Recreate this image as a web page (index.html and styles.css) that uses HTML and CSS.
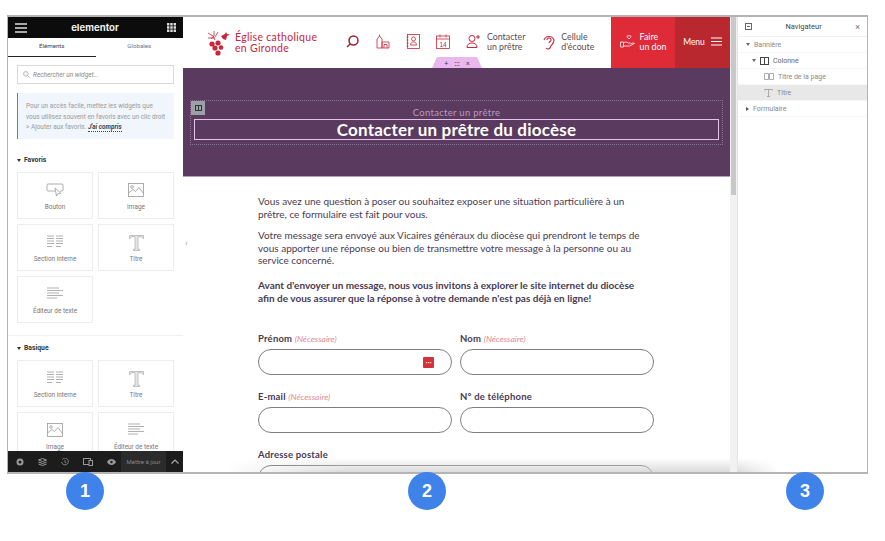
FILE: index.html
```html
<!doctype html>
<html lang="fr">
  <head>
    <meta charset="UTF-8" />
    <title>Contacter un prêtre</title>
    <link rel="stylesheet" href="styles.css">
  </head>
  <body>
    <div class="frame">
      <!-- panneau elementor -->
      <aside class="panel">
        <div class="panel-head">
          <svg width="12" height="10" viewBox="0 0 12 10"><path d="M0 1h12M0 5h12M0 9h12" stroke="#ddd" stroke-width="1.6"/></svg>
          <span class="brand">elementor</span>
          <svg width="9" height="9" viewBox="0 0 9 9" fill="#ddd"><path d="M0 0h2.4v2.4H0zM3.3 0h2.4v2.4H3.3zM6.6 0H9v2.4H6.6zM0 3.3h2.4v2.4H0zM3.3 3.3h2.4v2.4H3.3zM6.6 3.3H9v2.4H6.6zM0 6.6h2.4V9H0zM3.3 6.6h2.4V9H3.3zM6.6 6.6H9V9H6.6z"/></svg>
        </div>
        <div class="tabs">
          <div class="tab active">Éléments</div>
          <div class="tab">Globales</div>
        </div>
        <div class="panel-scroll">
          <div class="search">
            <svg width="7" height="7" viewBox="0 0 8 8" fill="none" stroke="#aaa"><circle cx="3.2" cy="3.2" r="2.6"/><path d="M5 5l2.6 2.6"/></svg>
            <span>Rechercher un widget...</span>
          </div>
          <div class="hint">
            Pour un accès facile, mettez les widgets que<br>vous utilisez souvent en favoris avec un clic droit<br>&gt; Ajouter aux favoris. <b>J'ai compris</b>
          </div>
          <div class="group-title"><i class="caret"></i>Favoris</div>
          <div class="widgets">
            <div class="widget">
              <svg width="18" height="15" viewBox="0 0 18 15" fill="none" stroke="#999" stroke-width=".8"><path d="M9 8H2a1 1 0 0 1-1-1V2a1 1 0 0 1 1-1h14a1 1 0 0 1 1 1v5a1 1 0 0 1-1 1h-2"/><path d="M9 5l1.5 8 1.6-2.4 2.6-.4z"/></svg>
              <span>Bouton</span>
            </div>
            <div class="widget">
              <svg width="16" height="14" viewBox="0 0 16 14" fill="none" stroke="#999" stroke-width=".8"><rect x=".5" y=".5" width="15" height="13"/><circle cx="4" cy="4" r="1.3"/><path d="M.5 10L5 6.5l2.5 2L11 4.5l4.5 6"/></svg>
              <span>Image</span>
            </div>
            <div class="widget">
              <svg width="16" height="13" viewBox="0 0 16 13" fill="none" stroke="#b0b0b0"><path d="M0 1h7M9 1h7M0 3.500h7M9 3.500h7M0 6h7M9 6h7M0 8.500h7M9 8.500h7M0 11.500h5M9 11.500h5"/></svg>
              <span>Section interne</span>
            </div>
            <div class="widget">
              <svg width="15" height="16" viewBox="0 0 15 16" fill="none" stroke="#aaa" stroke-width=".7"><path d="M.5.500h14v3h-.7c0-1-.6-1.800-2-1.800H9v12.600h1.500v1.200h-6v-1.200H6V1.700H3.200c-1.400 0-2 .8-2 1.800H.5z" fill="#e8e8e8"/></svg>
              <span>Titre</span>
            </div>
            <div class="widget">
              <svg width="16" height="12" viewBox="0 0 16 12" fill="none" stroke="#b0b0b0"><path d="M0 1h12M0 3.500h16M0 6h12M0 8.500h16M0 11h10"/></svg>
              <span>Éditeur de texte</span>
            </div>
          </div>
          <div class="group-title second"><i class="caret"></i>Basique</div>
          <div class="widgets">
            <div class="widget">
              <svg width="16" height="13" viewBox="0 0 16 13" fill="none" stroke="#b0b0b0"><path d="M0 1h7M9 1h7M0 3.500h7M9 3.500h7M0 6h7M9 6h7M0 8.500h7M9 8.500h7M0 11.500h5M9 11.500h5"/></svg>
              <span>Section interne</span>
            </div>
            <div class="widget">
              <svg width="15" height="16" viewBox="0 0 15 16" fill="none" stroke="#aaa" stroke-width=".7"><path d="M.5.500h14v3h-.7c0-1-.6-1.800-2-1.800H9v12.600h1.500v1.200h-6v-1.200H6V1.700H3.200c-1.400 0-2 .8-2 1.800H.5z" fill="#e8e8e8"/></svg>
              <span>Titre</span>
            </div>
            <div class="widget">
              <svg width="16" height="14" viewBox="0 0 16 14" fill="none" stroke="#999" stroke-width=".8"><rect x=".5" y=".5" width="15" height="13"/><circle cx="4" cy="4" r="1.3"/><path d="M.5 10L5 6.500l2.500 2L11 4.500l4.500 6"/></svg>
              <span>Image</span>
            </div>
            <div class="widget">
              <svg width="16" height="12" viewBox="0 0 16 12" fill="none" stroke="#b0b0b0"><path d="M0 1h12M0 3.500h16M0 6h12M0 8.500h16M0 11h10"/></svg>
              <span>Éditeur de texte</span>
            </div>
          </div>
        </div>
        <div class="panel-foot">
          <div class="foot-icons">
            <svg width="8" height="8" viewBox="0 0 8 8"><circle cx="4" cy="4" r="2.500" fill="none" stroke="#999" stroke-width="2"/></svg>
            <svg width="9" height="8" viewBox="0 0 9 8" fill="none" stroke="#999"><path d="M.5 2L4.500.5 8.500 2l-4 1.500zM.5 4l4 1.500 4-1.500M.5 6l4 1.500 4-1.500"/></svg>
            <svg width="8" height="8" viewBox="0 0 8 8" fill="none" stroke="#999" stroke-width=".8"><path d="M1.200 1.500A3.400 3.400 0 1 1 .6 4M4 2v2.200l1.400.8"/></svg>
            <svg width="10" height="8" viewBox="0 0 10 8" fill="none" stroke="#999"><rect x=".5" y=".5" width="7" height="6"/><rect x="6" y="2.500" width="3.500" height="5" fill="#1c1c1c"/></svg>
            <svg width="9" height="6" viewBox="0 0 9 6"><path d="M0 3c2-4 7-4 9 0-2 4-7 4-9 0z" fill="#999"/><circle cx="4.500" cy="3" r="1.200" fill="#1c1c1c"/></svg>
          </div>
          <div class="update">Mettre à jour</div>
          <div class="foot-arrow">
            <svg width="8" height="5" viewBox="0 0 8 5" fill="none" stroke="#aaa" stroke-width="1.200"><path d="M.5 4.500L4 1l3.500 3.500"/></svg>
          </div>
        </div>
        <div class="panel-toggle">‹</div>
      </aside>

      <!-- page -->
      <main class="canvas">
        <header class="site-head">
          <div class="logo">
            <svg width="23" height="26" viewBox="0 0 23 26">
              <g fill="#c8263a"><circle cx="5" cy="14" r="2.600"/><circle cx="11" cy="13" r="2.600"/><circle cx="8" cy="18" r="2.600"/><circle cx="14" cy="17.500" r="2.300"/><circle cx="11" cy="23" r="2.600"/><path d="M14 6l4-2 1-2 1 2 3 .5-3 1.500-1 4-3-1z"/></g>
              <path d="M1 3l5 3 2 4M7 1v5l-3 3M11 2L8 7M1 8h7" fill="none" stroke="#c8263a" stroke-width=".8"/>
            </svg>
            <div class="logo-text">Église catholique<br>en Gironde</div>
          </div>
          <nav class="site-nav">
            <svg class="search-ico" width="13" height="13" viewBox="0 0 13 13" fill="none" stroke="#a0212f" stroke-width="1.500"><circle cx="7.500" cy="5.500" r="4.500"/><path d="M4.300 8.700L1 12"/></svg>
            <svg class="nav-ico" width="14" height="15" viewBox="0 0 14 15" fill="none" stroke="#c8263a" stroke-width=".8"><path d="M1 14V5l2.500-3L6 5v9zM6 8h7v6H6zM8 14v-3.500h3V14M3.500 2V.5"/></svg>
            <svg class="nav-ico" width="14" height="15" viewBox="0 0 14 15" fill="none" stroke="#c8263a" stroke-width=".8"><rect x="1.500" y=".5" width="12" height="14"/><circle cx="7.500" cy="5" r="2"/><path d="M4.500 11c0-4 6-4 6 0zM.5 3h2M.5 6h2M.5 9h2M.5 12h2"/></svg>
            <svg class="nav-ico" width="14" height="15" viewBox="0 0 14 15" fill="none" stroke="#c8263a" stroke-width=".8"><rect x=".5" y="2" width="13" height="12.500"/><path d="M.5 5h13M4 .5v3M10 .5v3"/><text x="7" y="12.500" text-anchor="middle" class="cal-num">14</text></svg>
            <div class="nav-item contact">
              <svg width="15" height="15" viewBox="0 0 15 15" fill="none" stroke="#c8263a"><circle cx="6" cy="4.500" r="3"/><path d="M1 13.500c0-3 2-4.500 5-4.500s5 1.500 5 4.500zM12 1v4M10 3h4"/></svg>
              <span>Contacter<br>un prêtre</span>
            </div>
            <div class="nav-item ecoute">
              <svg width="12" height="16" viewBox="0 0 12 16" fill="none" stroke="#c8263a" stroke-width="1.100"><path d="M3 14c1.500 1.800 4 1 4.500-1 .4-2 3.500-3 3.500-7A5.300 5.300 0 0 0 1 6M4 6a2 2 0 0 1 4 0c0 1.500-2 1.500-2 3"/></svg>
              <span>Cellule<br>d'écoute</span>
            </div>
          </nav>
          <div class="don">
            <svg width="15" height="13" viewBox="0 0 15 13" fill="none" stroke="#fff" stroke-width=".8"><path d="M9 1c1-1 2.500 0 1.500 1.500L9 4 7.500 2.500C6.500 1 8 0 9 1zM.5 7h3v5h-3zM3.500 8c2-1.500 3-1 5 0h2M3.500 11h6l5-2.500c-1-1-2-.5-4 .5"/></svg>
            <span>Faire<br>un don</span>
          </div>
          <div class="menu">
            <span>Menu</span>
            <svg width="11" height="9" viewBox="0 0 11 9"><path d="M0 1h11M0 4.500h11M0 8h11" stroke="#fff"/></svg>
          </div>
          <div class="section-tab"><span>+</span><span>:::</span><span>×</span></div>
        </header>

        <section class="band">
          <div class="band-col">
            <div class="col-handle"><svg width="7" height="6" viewBox="0 0 7 6" fill="none" stroke="#333"><rect x=".5" y=".5" width="6" height="5"/><path d="M3.500 0v6"/></svg></div>
            <div class="band-sub">Contacter un prêtre</div>
            <h1 class="band-title">Contacter un prêtre du diocèse</h1>
          </div>
        </section>

        <section class="content">
          <p>Vous avez une question à poser ou souhaitez exposer une situation particulière à un<br>prêtre, ce formulaire est fait pour vous.</p>
          <p>Votre message sera envoyé aux Vicaires généraux du diocèse qui prendront le temps de<br>vous apporter une réponse ou bien de transmettre votre message à la personne ou au<br>service concerné.</p>
          <p class="strong">Avant d'envoyer un message, nous vous invitons à explorer le site internet du diocèse<br>afin de vous assurer que la réponse à votre demande n'est pas déjà en ligne!</p>

          <form class="form">
            <div class="field">
              <label>Prénom <em>(Nécessaire)</em></label>
              <div class="input"><i class="pw-ico">···</i></div>
            </div>
            <div class="field">
              <label>Nom <em>(Nécessaire)</em></label>
              <div class="input"></div>
            </div>
            <div class="field">
              <label>E-mail <em>(Nécessaire)</em></label>
              <div class="input"></div>
            </div>
            <div class="field">
              <label>N° de téléphone</label>
              <div class="input"></div>
            </div>
            <div class="field wide">
              <label>Adresse postale</label>
              <div class="input"></div>
            </div>
          </form>
        </section>
        <div class="fade"></div>
      </main>

      <div class="scrollbar"><div class="thumb"></div></div>

      <!-- navigateur -->
      <aside class="navigator">
        <div class="nav-head">
          <svg width="7" height="7" viewBox="0 0 7 7" fill="none" stroke="#666"><rect x=".5" y=".5" width="6" height="6"/><path d="M2 3.500h3"/></svg>
          <span>Navigateur</span>
          <span class="close">×</span>
        </div>
        <ul class="tree">
          <li class="lvl0"><i class="caret grey"></i>Bannière</li>
          <li class="lvl1"><i class="caret grey"></i><svg width="9" height="8" viewBox="0 0 9 8" fill="none" stroke="#444"><rect x=".5" y=".5" width="8" height="7"/><path d="M4.500 0v8"/></svg>Colonne</li>
          <li class="lvl2"><svg width="10" height="7" viewBox="0 0 10 7" fill="none" stroke="#aaa"><path d="M.5.500h4v6h-4zM5.500.500h4v6h-4z"/></svg>Titre de la page</li>
          <li class="lvl2 selected"><svg width="9" height="8" viewBox="0 0 9 8" fill="none" stroke="#aaa"><path d="M.5 1.500V.5h8v1M4.500.5v7M3 7.500h3"/></svg>Titre</li>
          <li class="lvl0"><i class="caret side"></i>Formulaire</li>
        </ul>
        <div class="nav-fade"></div>
      </aside>
    </div>

    <div class="badges">
      <div class="badge one">1</div>
      <div class="badge two">2</div>
      <div class="badge three">3</div>
    </div>
  </body>
</html>
```

FILE: styles.css
```css
* {
  padding: 0;
  margin: 0;
  box-sizing: border-box;
}
body {
  background-color: #fff;
  width: 885px;
  height: 541px;
  overflow: hidden;
  padding: 15px 0 0 7px;
  font-family: "Roboto", sans-serif;
}
.frame {
  width: 861px;
  height: 459px;
  border: 1px solid #b4b4b4;
  border-width: 2px 1px 2px 1px;
  display: flex;
  background-color: #fff;
}

/* panneau */
.panel {
  width: 175px;
  flex: none;
  display: flex;
  flex-direction: column;
  position: relative;
  background-color: #fff;
}
.panel-head {
  height: 21px;
  flex: none;
  background-color: #0c0c0c;
  display: flex;
  align-items: center;
  justify-content: space-between;
  padding: 0 7px;
}
.brand {
  color: #eee;
  font-size: 9.6px;
  font-weight: 700;
  font-family: "Inter", sans-serif;
  margin-right: 4px;
}
.tabs {
  display: flex;
  height: 19px;
  flex: none;
}
.tab {
  width: 50%;
  text-align: center;
  font-size: 6.2px;
  line-height: 17px;
  color: #777;
}
.tab.active {
  color: #444;
  border-bottom: 1px solid #222;
}
.panel-scroll {
  flex: 1;
  overflow: hidden;
  padding: 8px 9px 0;
}
.search {
  height: 19px;
  border: 1px solid #d8d8d8;
  display: flex;
  align-items: center;
  gap: 3px;
  padding: 0 5px;
  font-size: 6.5px;
  font-style: italic;
  color: #888;
}
.hint {
  margin-top: 9px;
  background-color: #f0f6fc;
  border-left: 1px solid #4e84c4;
  height: 46px;
  padding: 8px 0 0 8px;
  font-size: 6.45px;
  line-height: 10.5px;
  color: #999;
  white-space: nowrap;
}
.hint b {
  font-style: italic;
  color: #444;
  border-bottom: 1px dotted #444;
}
.group-title {
  margin-top: 17px;
  font-size: 6.8px;
  font-weight: 700;
  color: #333;
  line-height: 8px;
  display: flex;
  align-items: center;
}
.group-title.second {
  margin-top: 21px;
  position: relative;
}
.group-title.second::before {
  content: "";
  position: absolute;
  left: -9px;
  right: -9px;
  top: -9px;
  border-top: 1px solid #f0f0f0;
}
.caret {
  display: inline-block;
  border-left: 2.5px solid transparent;
  border-right: 2.5px solid transparent;
  border-top: 3px solid #333;
  margin-right: 3px;
}
.caret.grey {
  border-top-color: #666;
}
.caret.side {
  border-top: 2.5px solid transparent;
  border-bottom: 2.5px solid transparent;
  border-left: 3px solid #555;
  border-right: 0;
}
.widgets {
  margin-top: 8px;
  display: grid;
  grid-template-columns: 76px 76px;
  grid-auto-rows: 47px;
  gap: 5px;
}
.widget {
  border: 1px solid #ececec;
  display: flex;
  flex-direction: column;
  align-items: center;
  padding-top: 10px;
  font-size: 6.4px;
  color: #777;
  position: relative;
}
.widget span {
  position: absolute;
  top: 30px;
  white-space: nowrap;
}
.panel-foot {
  height: 21px;
  flex: none;
  background-color: #1c1c1c;
  display: flex;
  align-items: center;
  color: #888;
  font-size: 6px;
}
.foot-icons {
  width: 113px;
  display: flex;
  justify-content: space-between;
  align-items: center;
  padding: 0 5px 0 8px;
}
.update {
  width: 45px;
  height: 100%;
  background-color: #2b2b2b;
  line-height: 21px;
  text-align: center;
}
.foot-arrow {
  flex: 1;
  display: flex;
  justify-content: center;
}
.panel-toggle {
  position: absolute;
  right: -7px;
  top: 215px;
  width: 7px;
  height: 26px;
  background-color: #fff;
  font-size: 8px;
  line-height: 24px;
  color: #888;
  text-align: center;
  z-index: 2;
}

/* page */
.canvas {
  width: 547px;
  flex: none;
  overflow: hidden;
  position: relative;
  font-family: "Lato", sans-serif;
  color: #4a3a52;
}
.site-head {
  height: 51px;
  display: flex;
  align-items: stretch;
  position: relative;
  background-color: #fff;
}
.logo {
  display: flex;
  align-items: center;
  gap: 5px;
  width: 154px;
  padding-left: 24px;
}
.logo-text {
  color: #c8263a;
  font-size: 10.5px;
  line-height: 11px;
  letter-spacing: .3px;
  white-space: nowrap;
}
.site-nav {
  display: flex;
  align-items: center;
  flex: 1;
  padding-left: 9px;
  padding-bottom: 2px;
}
.search-ico {
  margin-right: 17px;
}
.nav-ico {
  margin-right: 16px;
}
.cal-num {
  font-size: 6.5px;
  fill: #c8263a;
  stroke: none;
  font-family: "Liberation Sans", sans-serif;
}
.nav-item {
  display: flex;
  align-items: center;
  gap: 6px;
  font-size: 8.8px;
  line-height: 9.5px;
  color: #5a4a5a;
}
.ecoute {
  margin-left: 18px;
}
.don {
  width: 64px;
  background-color: #df2a38;
  color: #fff;
  display: flex;
  align-items: center;
  justify-content: center;
  gap: 5px;
  font-size: 8.8px;
  line-height: 9.5px;
  padding-bottom: 2px;
}
.menu {
  width: 55px;
  background-color: #b9272f;
  color: #fff;
  display: flex;
  align-items: center;
  justify-content: center;
  gap: 6px;
  font-size: 8.5px;
  padding-bottom: 2px;
}
.section-tab {
  position: absolute;
  left: 249px;
  bottom: 0;
  width: 50px;
  height: 11px;
  background-color: #e8b8ee;
  clip-path: polygon(10% 0, 90% 0, 100% 100%, 0 100%);
  display: flex;
  justify-content: center;
  align-items: center;
  gap: 6px;
  font-size: 7px;
  color: #333;
}
.band {
  height: 109px;
  background-color: #5a3a5f;
  padding: 32px 7px 0;
  border-bottom: 1px solid #b79bc0;
}
.band-col {
  height: 45px;
  border: 1px dotted #8d7494;
  padding: 6px 3px 0;
  position: relative;
  text-align: center;
}
.col-handle {
  position: absolute;
  left: 0;
  top: 0;
  width: 14px;
  height: 14px;
  background-color: #9ba1a6;
  display: flex;
  align-items: center;
  justify-content: center;
}
.band-sub {
  font-size: 9.5px;
  line-height: 11px;
  color: #b79bc0;
  letter-spacing: .3px;
}
.band-title {
  margin-top: 1px;
  height: 21px;
  border: 1px solid #e5c2e8;
  color: #fff;
  font-size: 17px;
  line-height: 19px;
  font-weight: 700;
  letter-spacing: .2px;
}
.content {
  padding: 18px 76px 0 75px;
  font-size: 10px;
  line-height: 12.6px;
}
.content p {
  margin-bottom: 9px;
  white-space: nowrap;
}
.content p.strong {
  font-weight: 700;
  margin-top: 12px;
}
.form {
  margin-top: 29px;
  display: grid;
  grid-template-columns: 194px 194px;
  gap: 16px 8px;
}
.field label {
  display: block;
  font-size: 9.5px;
  font-weight: 700;
  line-height: 12px;
  margin-bottom: 4px;
  letter-spacing: .2px;
}
.field em {
  font-size: 8.5px;
  font-weight: 400;
  color: #e28a8f;
  letter-spacing: 0;
}
.input {
  height: 26px;
  border: 1px solid #7d7d85;
  border-radius: 13px;
  display: flex;
  align-items: center;
  justify-content: flex-end;
  padding-right: 17px;
  background-color: #fff;
}
.pw-ico {
  width: 11px;
  height: 11px;
  background-color: #d4333a;
  border-radius: 1px;
  color: #fff;
  font-size: 8px;
  font-style: normal;
  line-height: 10px;
  text-align: center;
}
.wide {
  grid-column: 1 / 3;
}
.fade {
  position: absolute;
  left: 40px;
  right: 0;
  bottom: 0;
  height: 14px;
  background: linear-gradient(to bottom, rgba(205, 205, 205, 0), rgba(205, 205, 205, .7));
  mask-image: linear-gradient(to right, transparent, #000 120px);
}
.scrollbar {
  width: 8px;
  flex: none;
  background-color: #f1f1f1;
  border-right: 1px solid #e4e4e4;
}
.thumb {
  height: 178px;
  background-color: #c8c8c8;
  margin: 0 1px;
}

/* navigateur */
.navigator {
  flex: 1;
  position: relative;
  font-size: 7px;
  color: #888;
}
.nav-head {
  height: 20px;
  display: flex;
  align-items: center;
  justify-content: space-between;
  padding: 0 7px;
  font-size: 7.5px;
  color: #444;
  border-bottom: 1px solid #f0f0f0;
}
.close {
  font-size: 9px;
  color: #777;
}
.tree {
  list-style: none;
}
.tree li {
  height: 16px;
  display: flex;
  align-items: center;
  gap: 4px;
  border-bottom: 1px solid #f6f6f6;
}
.tree .caret {
  margin-right: 0;
}
.lvl0 {
  padding-left: 8px;
}
.lvl1 {
  padding-left: 14px;
  color: #666;
}
.lvl2 {
  padding-left: 26px;
}
.tree .selected {
  background-color: #e8e8e8;
}
.nav-fade {
  position: absolute;
  left: 0;
  bottom: 0;
  width: 40px;
  height: 14px;
  background: linear-gradient(to bottom, rgba(205, 205, 205, 0), rgba(205, 205, 205, .7));
  mask-image: linear-gradient(to left, transparent, #000);
}

/* pastilles */
.badges {
  display: flex;
  padding-left: 59px;
  margin-top: -2px;
}
.badge {
  width: 38px;
  height: 38px;
  border-radius: 50%;
  background-color: #3f82ea;
  color: #fff;
  font-size: 18px;
  font-weight: 700;
  font-family: "Liberation Sans", sans-serif;
  display: flex;
  align-items: center;
  justify-content: center;
}
.two {
  margin-left: 304px;
}
.three {
  margin-left: 340px;
}
```
